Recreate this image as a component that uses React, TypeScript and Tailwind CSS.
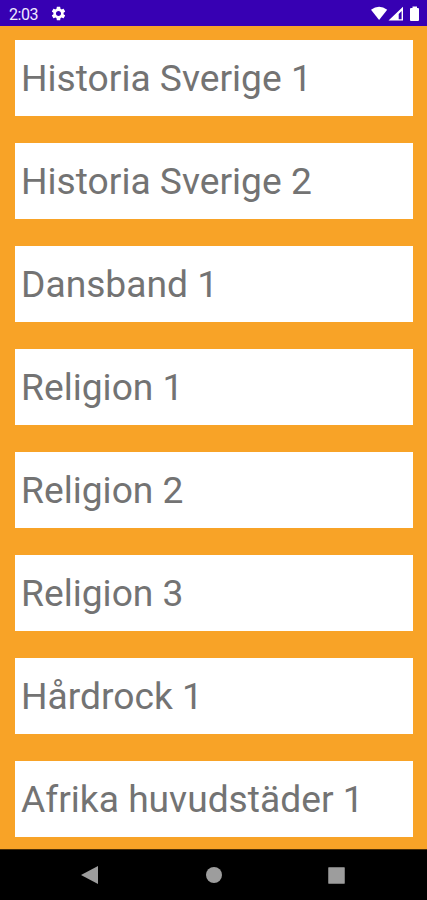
import React from "react";

const items = [
  "Historia Sverige 1",
  "Historia Sverige 2",
  "Dansband 1",
  "Religion 1",
  "Religion 2",
  "Religion 3",
  "Hårdrock 1",
  "Afrika huvudstäder 1",
];

export default function App() {
  return (
    <div className="flex h-[900px] w-[427px] flex-col overflow-hidden bg-[#f8a327] font-['Roboto',sans-serif]">
      <header className="flex h-[26px] shrink-0 items-center bg-[#3700b3] pl-[9px] pr-[7px] text-[#f0eaff]">
        <span className="w-[30px] pt-[3px] text-[16px] leading-none tracking-[-0.45px]">2:03</span>
        <svg className="ml-[11px] mt-[1px] h-[17px] w-[17px]" viewBox="0 0 24 24" fill="white">
          <path d="M19.14 12.94c.04-.3.06-.61.06-.94 0-.32-.02-.64-.07-.94l2.03-1.58c.18-.14.23-.41.12-.61l-1.92-3.32c-.12-.22-.37-.29-.59-.22l-2.39.96c-.5-.38-1.03-.7-1.62-.94L14.4 2.81c-.04-.24-.24-.41-.48-.41h-3.84c-.24 0-.43.17-.47.41L9.25 5.35C8.66 5.59 8.12 5.92 7.63 6.29L5.24 5.33c-.22-.08-.47 0-.59.22L2.74 8.87c-.12.21-.08.47.12.61l2.03 1.58C4.84 11.36 4.8 11.69 4.8 12s.02.64.07.94l-2.03 1.58c-.18.14-.23.41-.12.61l1.92 3.32c.12.22.37.29.59.22l2.39-.96c.5.38 1.03.7 1.62.94l.36 2.54c.05.24.24.41.48.41h3.84c.24 0 .44-.17.47-.41l.36-2.54c.59-.24 1.13-.56 1.62-.94l2.39.96c.22.08.47 0 .59-.22l1.92-3.32c.12-.22.07-.47-.12-.61l-2.01-1.58zM12 15.6c-1.98 0-3.6-1.62-3.6-3.6s1.62-3.6 3.6-3.6 3.6 1.62 3.6 3.6-1.62 3.6-3.6 3.6z" />
        </svg>
        <svg className="ml-auto mt-[1px] h-[16px] w-[49px]" viewBox="0 0 49 16" fill="white">
          <path d="M0 3.8Q8.1 -2.2 16.2 3.8L8.1 14Z" />
          <path fillRule="evenodd" d="M32 .7V14.6H17.5ZM30.6 5L27.7 8V13.2H30.6Z" />
          <path d="M39 3Q39 2 40 2H41.5V.4H46V2H47Q48 2 48 3V14Q48 15 47 15H40Q39 15 39 14Z" />
        </svg>
      </header>
      <main className="flex h-[823px] shrink-0 flex-col gap-[26.5px] overflow-hidden pl-[15px] pr-[14px] pt-[13.5px]">
        {items.map((item) => (
          <div key={item} className="flex h-[76.5px] shrink-0 items-center bg-white pl-[6px] pt-[2px] text-[37.2px] leading-none text-[#737373]">
            {item}
          </div>
        ))}
      </main>
      <nav className="flex h-[51px] shrink-0 items-center border-t border-[#4a2e06] bg-black pl-[81px] pr-[82px] text-[#9d9d9d]">
        <svg className="h-[18px] w-[17px]" viewBox="0 0 17 18" fill="currentColor"><path d="M0 9L17 0V18Z" /></svg>
        <div className="ml-[108px] h-4 w-4 rounded-full bg-current" />
        <div className="ml-auto h-[17px] w-[17px] rounded-[1px] border border-[#777777] bg-current" />
      </nav>
    </div>
  );
}
